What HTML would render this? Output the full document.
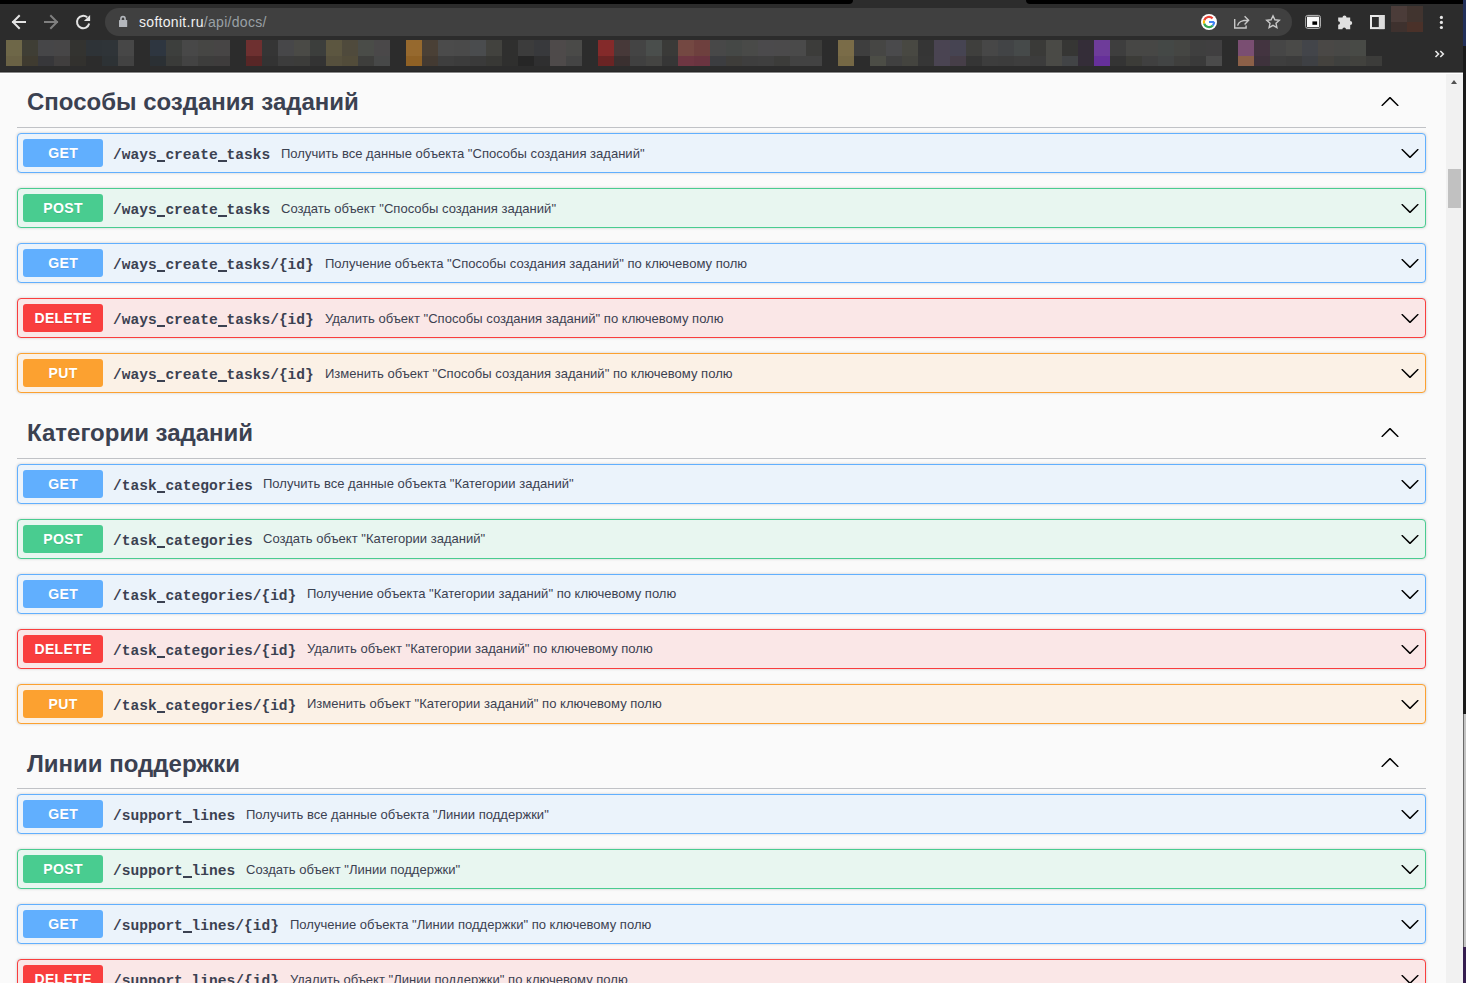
<!DOCTYPE html>
<html><head><meta charset="utf-8"><title>Swagger UI</title>
<style>
*{box-sizing:border-box}
html,body{margin:0;padding:0;width:1466px;height:983px;overflow:hidden;background:#fafafa;font-family:"Liberation Sans",sans-serif;position:relative}
#chrome{position:absolute;left:0;top:0;width:1466px;height:72px;background:#2c2c2c;border-bottom:1px solid #262626}
#cl1{position:absolute;left:0;top:72px;width:1463px;height:1px;background:#8a8a8a}
#cl2{position:absolute;left:0;top:73px;width:1463px;height:1px;background:#fff}
#chrome i{position:absolute;display:block;width:16px}
.blk{position:absolute;background:#000;top:0;height:4px}
#omni{position:absolute;left:105px;top:8px;width:1187px;height:28px;border-radius:14px;background:#404040}
#url{position:absolute;left:139px;top:13px;font-size:14px;letter-spacing:0.3px;line-height:18px;color:#f1f1f1;white-space:nowrap}
#url span{color:#9aa0a6}
.ic{position:absolute}
#page{position:absolute;left:0;top:73px;width:1446px;height:910px;background:#fafafa;overflow:hidden}
#sb{position:absolute;left:1446px;top:74px;width:17px;height:909px;background:#f1f1f1}
#thumb{position:absolute;left:1448px;top:169px;width:13px;height:39px;background:#c1c1c1}
#edge{position:absolute;left:1463px;top:0;width:3px;height:983px;background:linear-gradient(#22305a 0,#22305a 46px,#1a1a1a 46px,#1a1a1a 714px,transparent 714px,transparent 947px,#361e50 947px)}
#edge2{position:absolute;left:1463px;top:714px;width:3px;height:233px;background:#c4c4c4;border-left:1px solid #6a6a6a}
#sbup{position:absolute;left:1451px;top:80px;width:0;height:0;border-left:3.75px solid transparent;border-right:3.75px solid transparent;border-bottom:4px solid #505050}
.tag{position:absolute;left:17px;width:1409px;height:54px}
.tag h3{position:absolute;left:10px;top:14px;margin:0;font-size:24px;line-height:29px;font-weight:bold;color:#3b4151;white-space:nowrap}
.chevup{position:absolute;left:1363px;top:19px;fill:#000}
.sep{position:absolute;left:17px;width:1409px;height:1px;background:rgba(59,65,81,.3)}
.op{position:absolute;left:17px;width:1409px;height:40px;border:1px solid;border-radius:4px;box-shadow:0 0 3px rgba(0,0,0,.19)}
.op .m{position:absolute;left:5px;top:5px;width:80px;height:28px;border-radius:3px;color:#fff;font-size:14px;font-weight:bold;line-height:28px;text-align:center;letter-spacing:0.4px;text-indent:0.4px;text-shadow:0 1px 0 rgba(0,0,0,.1)}
.op .pd{position:absolute;left:95px;top:13px;height:18px;display:flex;align-items:baseline;white-space:nowrap;color:#3b4151}
.op .p{font-family:"Liberation Mono",monospace;font-size:14.56px;font-weight:bold;padding-right:10.8px}
.op .u{position:relative;color:transparent}
.op .u::after{content:'';position:absolute;left:0;right:0;top:12.6px;height:2px;background:#3b4151}
.op .d{font-size:13.5px;position:relative;top:0px;display:inline-block;transform:scaleX(0.9658);transform-origin:0 50%}
.op .chev{position:absolute;left:1382px;top:9px;fill:#000}
.get{border-color:#61affe;background:#ebf3fb} .get .m{background:#61affe}
.post{border-color:#49cc90;background:#e8f6f0} .post .m{background:#49cc90}
.delete{border-color:#f93e3e;background:#fae7e7} .delete .m{background:#f93e3e}
.put{border-color:#fca130;background:#fbf1e6} .put .m{background:#fca130}
</style></head><body>
<div id="chrome">
<div class="blk" style="left:0;width:853px;border-bottom-right-radius:6px"></div>
<div class="blk" style="left:1026px;width:437px;border-bottom-left-radius:6px"></div>
<div id="omni"></div>
<div id="url">softonit.ru<span>/api/docs/</span></div>
<i style="left:6px;top:40px;height:16px;background:#6e6748"></i>
<i style="left:6px;top:56px;height:10px;background:#6a6245"></i>
<i style="left:22px;top:40px;height:16px;background:#3f3e35"></i>
<i style="left:22px;top:56px;height:10px;background:#3f3b30"></i>
<i style="left:38px;top:40px;height:16px;background:#464648"></i>
<i style="left:38px;top:56px;height:10px;background:#37373a"></i>
<i style="left:54px;top:40px;height:16px;background:#474647"></i>
<i style="left:54px;top:56px;height:10px;background:#403e3e"></i>
<i style="left:70px;top:40px;height:16px;background:#333330"></i>
<i style="left:70px;top:56px;height:10px;background:#32312e"></i>
<i style="left:86px;top:40px;height:16px;background:#2e3337"></i>
<i style="left:86px;top:56px;height:10px;background:#2c2c2c"></i>
<i style="left:102px;top:40px;height:16px;background:#2f3438"></i>
<i style="left:102px;top:56px;height:10px;background:#2d3235"></i>
<i style="left:118px;top:40px;height:16px;background:#474747"></i>
<i style="left:118px;top:56px;height:10px;background:#424242"></i>
<i style="left:150px;top:40px;height:16px;background:#2e3640"></i>
<i style="left:150px;top:56px;height:10px;background:#2b3034"></i>
<i style="left:166px;top:40px;height:16px;background:#3d3f3d"></i>
<i style="left:166px;top:56px;height:10px;background:#3a3b39"></i>
<i style="left:182px;top:40px;height:16px;background:#484848"></i>
<i style="left:182px;top:56px;height:10px;background:#434343"></i>
<i style="left:198px;top:40px;height:16px;background:#464644"></i>
<i style="left:198px;top:56px;height:10px;background:#3d3d3c"></i>
<i style="left:214px;top:40px;height:16px;background:#474545"></i>
<i style="left:214px;top:56px;height:10px;background:#3e3c3c"></i>
<i style="left:230px;top:40px;height:16px;background:#2c2c2c"></i>
<i style="left:230px;top:56px;height:10px;background:#2c2c2c"></i>
<i style="left:246px;top:40px;height:16px;background:#6e3030"></i>
<i style="left:246px;top:56px;height:10px;background:#582626"></i>
<i style="left:262px;top:40px;height:16px;background:#353535"></i>
<i style="left:262px;top:56px;height:10px;background:#333333"></i>
<i style="left:278px;top:40px;height:16px;background:#474749"></i>
<i style="left:278px;top:56px;height:10px;background:#3c3c3c"></i>
<i style="left:294px;top:40px;height:16px;background:#4a4a46"></i>
<i style="left:294px;top:56px;height:10px;background:#3c3c3a"></i>
<i style="left:310px;top:40px;height:16px;background:#3c3e3c"></i>
<i style="left:310px;top:56px;height:10px;background:#333333"></i>
<i style="left:326px;top:40px;height:16px;background:#5c5640"></i>
<i style="left:326px;top:56px;height:10px;background:#56503d"></i>
<i style="left:342px;top:40px;height:16px;background:#4f4a3c"></i>
<i style="left:342px;top:56px;height:10px;background:#524c3a"></i>
<i style="left:358px;top:40px;height:16px;background:#4a4c48"></i>
<i style="left:358px;top:56px;height:10px;background:#3e3e3c"></i>
<i style="left:374px;top:40px;height:16px;background:#4a4849"></i>
<i style="left:374px;top:56px;height:10px;background:#474848"></i>
<i style="left:406px;top:40px;height:16px;background:#96692e"></i>
<i style="left:406px;top:56px;height:10px;background:#8f6125"></i>
<i style="left:422px;top:40px;height:16px;background:#4a4036"></i>
<i style="left:422px;top:56px;height:10px;background:#433a32"></i>
<i style="left:438px;top:40px;height:16px;background:#4b4b4b"></i>
<i style="left:438px;top:56px;height:10px;background:#3e3e3e"></i>
<i style="left:454px;top:40px;height:16px;background:#4a4a4a"></i>
<i style="left:454px;top:56px;height:10px;background:#3c3c3c"></i>
<i style="left:470px;top:40px;height:16px;background:#4a4c4e"></i>
<i style="left:470px;top:56px;height:10px;background:#3a3a3a"></i>
<i style="left:486px;top:40px;height:16px;background:#42423e"></i>
<i style="left:486px;top:56px;height:10px;background:#383835"></i>
<i style="left:502px;top:40px;height:16px;background:#2f2f2e"></i>
<i style="left:502px;top:56px;height:10px;background:#2f2f2e"></i>
<i style="left:518px;top:40px;height:16px;background:#3c3c3c"></i>
<i style="left:518px;top:56px;height:10px;background:#262626"></i>
<i style="left:534px;top:40px;height:16px;background:#38393c"></i>
<i style="left:534px;top:56px;height:10px;background:#2f2f30"></i>
<i style="left:550px;top:40px;height:16px;background:#4e4a4a"></i>
<i style="left:550px;top:56px;height:10px;background:#4e4a4a"></i>
<i style="left:566px;top:40px;height:16px;background:#4a4a48"></i>
<i style="left:566px;top:56px;height:10px;background:#444444"></i>
<i style="left:598px;top:40px;height:16px;background:#842a2a"></i>
<i style="left:598px;top:56px;height:10px;background:#6a2424"></i>
<i style="left:614px;top:40px;height:16px;background:#473939"></i>
<i style="left:614px;top:56px;height:10px;background:#3a3030"></i>
<i style="left:630px;top:40px;height:16px;background:#444444"></i>
<i style="left:630px;top:56px;height:10px;background:#404040"></i>
<i style="left:646px;top:40px;height:16px;background:#4a4e4c"></i>
<i style="left:646px;top:56px;height:10px;background:#444442"></i>
<i style="left:662px;top:40px;height:16px;background:#3a3a38"></i>
<i style="left:662px;top:56px;height:10px;background:#363636"></i>
<i style="left:678px;top:40px;height:16px;background:#744842"></i>
<i style="left:678px;top:56px;height:10px;background:#6e3642"></i>
<i style="left:694px;top:40px;height:16px;background:#6e403e"></i>
<i style="left:694px;top:56px;height:10px;background:#6a3440"></i>
<i style="left:710px;top:40px;height:16px;background:#484848"></i>
<i style="left:710px;top:56px;height:10px;background:#3c3d40"></i>
<i style="left:726px;top:40px;height:16px;background:#454846"></i>
<i style="left:726px;top:56px;height:10px;background:#3e3d3a"></i>
<i style="left:742px;top:40px;height:16px;background:#494a48"></i>
<i style="left:742px;top:56px;height:10px;background:#3e3e3e"></i>
<i style="left:758px;top:40px;height:16px;background:#4b4a4c"></i>
<i style="left:758px;top:56px;height:10px;background:#3f3f3f"></i>
<i style="left:774px;top:40px;height:16px;background:#4b4a4b"></i>
<i style="left:774px;top:56px;height:10px;background:#3c3c3a"></i>
<i style="left:790px;top:40px;height:16px;background:#4a4a4a"></i>
<i style="left:790px;top:56px;height:10px;background:#424242"></i>
<i style="left:806px;top:40px;height:16px;background:#3c3c3a"></i>
<i style="left:806px;top:56px;height:10px;background:#424242"></i>
<i style="left:838px;top:40px;height:16px;background:#7a6c48"></i>
<i style="left:838px;top:56px;height:10px;background:#756845"></i>
<i style="left:854px;top:40px;height:16px;background:#3e3e3e"></i>
<i style="left:854px;top:56px;height:10px;background:#2c2c2c"></i>
<i style="left:870px;top:40px;height:16px;background:#464644"></i>
<i style="left:870px;top:56px;height:10px;background:#4c4d46"></i>
<i style="left:886px;top:40px;height:16px;background:#4a4a4c"></i>
<i style="left:886px;top:56px;height:10px;background:#404040"></i>
<i style="left:902px;top:40px;height:16px;background:#484842"></i>
<i style="left:902px;top:56px;height:10px;background:#44443f"></i>
<i style="left:918px;top:40px;height:16px;background:#353535"></i>
<i style="left:918px;top:56px;height:10px;background:#363636"></i>
<i style="left:934px;top:40px;height:16px;background:#4a4452"></i>
<i style="left:934px;top:56px;height:10px;background:#4a4452"></i>
<i style="left:950px;top:40px;height:16px;background:#464452"></i>
<i style="left:950px;top:56px;height:10px;background:#463e48"></i>
<i style="left:966px;top:40px;height:16px;background:#3f3f3d"></i>
<i style="left:966px;top:56px;height:10px;background:#353535"></i>
<i style="left:982px;top:40px;height:16px;background:#474747"></i>
<i style="left:982px;top:56px;height:10px;background:#3d3d3d"></i>
<i style="left:998px;top:40px;height:16px;background:#424446"></i>
<i style="left:998px;top:56px;height:10px;background:#3c3c3c"></i>
<i style="left:1014px;top:40px;height:16px;background:#464a4a"></i>
<i style="left:1014px;top:56px;height:10px;background:#3e3e3e"></i>
<i style="left:1030px;top:40px;height:16px;background:#3a3a38"></i>
<i style="left:1030px;top:56px;height:10px;background:#3c3c3c"></i>
<i style="left:1046px;top:40px;height:16px;background:#4a4a46"></i>
<i style="left:1046px;top:56px;height:10px;background:#4a4a46"></i>
<i style="left:1062px;top:40px;height:16px;background:#363634"></i>
<i style="left:1062px;top:56px;height:10px;background:#424446"></i>
<i style="left:1078px;top:40px;height:16px;background:#342d38"></i>
<i style="left:1078px;top:56px;height:10px;background:#342d38"></i>
<i style="left:1094px;top:40px;height:16px;background:#6e3c9a"></i>
<i style="left:1094px;top:56px;height:10px;background:#66309a"></i>
<i style="left:1110px;top:40px;height:16px;background:#3e3e3e"></i>
<i style="left:1110px;top:56px;height:10px;background:#343434"></i>
<i style="left:1126px;top:40px;height:16px;background:#474745"></i>
<i style="left:1126px;top:56px;height:10px;background:#3c3c38"></i>
<i style="left:1142px;top:40px;height:16px;background:#474745"></i>
<i style="left:1142px;top:56px;height:10px;background:#404040"></i>
<i style="left:1158px;top:40px;height:16px;background:#444846"></i>
<i style="left:1158px;top:56px;height:10px;background:#424444"></i>
<i style="left:1174px;top:40px;height:16px;background:#454643"></i>
<i style="left:1174px;top:56px;height:10px;background:#3f3f3d"></i>
<i style="left:1190px;top:40px;height:16px;background:#3f3f3f"></i>
<i style="left:1190px;top:56px;height:10px;background:#3a3a3a"></i>
<i style="left:1206px;top:40px;height:16px;background:#403f40"></i>
<i style="left:1206px;top:56px;height:10px;background:#4b4b4b"></i>
<i style="left:1238px;top:40px;height:16px;background:#7a4e72"></i>
<i style="left:1238px;top:56px;height:10px;background:#8c6048"></i>
<i style="left:1254px;top:40px;height:16px;background:#433440"></i>
<i style="left:1254px;top:56px;height:10px;background:#3e323c"></i>
<i style="left:1270px;top:40px;height:16px;background:#464646"></i>
<i style="left:1270px;top:56px;height:10px;background:#3e3e3e"></i>
<i style="left:1286px;top:40px;height:16px;background:#4a4a48"></i>
<i style="left:1286px;top:56px;height:10px;background:#3c3c3c"></i>
<i style="left:1302px;top:40px;height:16px;background:#43454a"></i>
<i style="left:1302px;top:56px;height:10px;background:#3e4044"></i>
<i style="left:1318px;top:40px;height:16px;background:#4a4846"></i>
<i style="left:1318px;top:56px;height:10px;background:#44423e"></i>
<i style="left:1334px;top:40px;height:16px;background:#484846"></i>
<i style="left:1334px;top:56px;height:10px;background:#3f403e"></i>
<i style="left:1350px;top:40px;height:16px;background:#484a46"></i>
<i style="left:1350px;top:56px;height:10px;background:#42423e"></i>
<i style="left:1366px;top:56px;height:10px;background:#3c3c3a"></i>
<svg id="icons" width="1466" height="72" viewBox="0 0 1466 72" style="position:absolute;left:0;top:0">
<g fill="none" stroke="#e3e3e3" stroke-width="2" stroke-linecap="square">
<path d="M13 22H25M19 16L13 22L19 28"/>
</g>
<g fill="none" stroke="#7f7f7f" stroke-width="2" stroke-linecap="square">
<path d="M45 22H57M51 16L57 22L51 28"/>
</g>
<path fill="none" stroke="#e3e3e3" stroke-width="2" d="M87.2 17.3A6.2 6.2 0 1 0 89.2 23.5"/>
<path fill="#e3e3e3" d="M83.9 21.1H90.1V14.9Z"/>
<path fill="none" stroke="#b4b7bc" stroke-width="1.6" d="M120.9 20.5V18.9A2.1 2.3 0 0 1 125.1 18.9V20.5"/>
<rect x="119" y="20" width="8.2" height="7.1" rx="0.6" fill="#b4b7bc"/>
<circle cx="1209" cy="22" r="8" fill="#fff"/>
<path fill="none" stroke="#ea4335" stroke-width="2.2" d="M1212.6 18.4A5.1 5.1 0 0 0 1204.2 20.3"/>
<path fill="none" stroke="#fbbc05" stroke-width="2.2" d="M1204.2 20.3A5.1 5.1 0 0 0 1204.2 23.7"/>
<path fill="none" stroke="#34a853" stroke-width="2.2" d="M1204.2 23.7A5.1 5.1 0 0 0 1212.8 25.4"/>
<path fill="none" stroke="#4285f4" stroke-width="2.2" d="M1212.8 25.4A5.1 5.1 0 0 0 1214.1 22"/>
<path fill="#4285f4" d="M1209 21H1214.2V23H1209Z"/>
<g fill="none" stroke="#c8c8c8" stroke-width="1.4">
<path d="M1234.7 19V28H1246.1V25.5"/>
<path d="M1237.6 25.6C1238.6 21.5 1241.5 20.3 1248.2 20.3M1244.6 16.2L1248.6 20.3L1244.6 24.4"/>
<path stroke-linejoin="miter" d="M1273 15.8L1274.9 19.8L1279.3 20.3L1276 23.3L1276.9 27.6L1273 25.4L1269.1 27.6L1270 23.3L1266.7 20.3L1271.1 19.8Z"/>
</g>
<rect x="1305.7" y="15.4" width="14.7" height="13" rx="2" fill="#111" stroke="#bdbdbd" stroke-width="1"/>
<rect x="1307" y="16.6" width="12.2" height="10.6" fill="#fafafa"/>
<rect x="1312.4" y="21.4" width="4.7" height="3.4" fill="#000"/>
<path fill="#e0e0e0" d="M1338.2 17.6H1342.5A2 2 0 1 1 1346.5 17.6H1350.2V21A2 2 0 1 1 1350.2 25V29.2H1346A1.8 1.8 0 0 0 1342.4 29.2H1338.2V24.8A1.8 1.8 0 0 0 1338.2 21.2Z"/>
<rect x="1371" y="16" width="12.8" height="12.1" fill="none" stroke="#e8e8e8" stroke-width="2"/>
<rect x="1378.8" y="15" width="5.3" height="14.1" fill="#dcdcdc"/>
<rect x="1391" y="6" width="16" height="16" fill="#4b3c39"/>
<rect x="1407" y="6" width="16" height="16" fill="#41342f"/>
<rect x="1391" y="22" width="16" height="10" fill="#3e312e"/>
<rect x="1407" y="22" width="16" height="10" fill="#4a3129"/>
<circle cx="1441.4" cy="17.4" r="1.6" fill="#e8e8e8"/>
<circle cx="1441.4" cy="22.4" r="1.6" fill="#e8e8e8"/>
<circle cx="1441.4" cy="27.5" r="1.6" fill="#e8e8e8"/>
<path fill="none" stroke="#e8e8e8" stroke-width="1.6" d="M1435.5 51L1438.5 54L1435.5 57M1440.3 51L1443.3 54L1440.3 57"/>
</svg>
</div>
<div id="page"></div>
<div id="cl1"></div><div id="cl2"></div>
<div class="tag" style="top:73px"><h3 style="top:14px">Способы создания заданий</h3><svg class="chevup" width="20" height="20" viewBox="0 0 20 20"><path d="M2.582 13.891c-.272.268-.709.268-.979 0s-.271-.701 0-.969l7.908-7.83c.27-.268.707-.268.979 0l7.908 7.83c.27.268.27.701 0 .969-.271.268-.709.268-.979 0L10 6.75l-7.418 7.141z"/></svg></div>
<div class="sep" style="top:127px"></div>
<div class="op get" style="top:133px"><span class="m">GET</span><div class="pd"><span class="p">/ways<span class="u">_</span>create<span class="u">_</span>tasks</span><span class="d" style="top:-1px">Получить все данные объекта "Способы создания заданий"</span></div><svg class="chev" width="20" height="20" viewBox="0 0 20 20"><path d="M17.418 6.109c.272-.268.709-.268.979 0s.271.701 0 .969l-7.908 7.83c-.27.268-.707.268-.979 0l-7.908-7.83c-.27-.268-.27-.701 0-.969.271-.268.709-.268.979 0L10 13.25l7.418-7.141z"/></svg></div>
<div class="op post" style="top:188px"><span class="m">POST</span><div class="pd"><span class="p">/ways<span class="u">_</span>create<span class="u">_</span>tasks</span><span class="d" style="top:-1px">Создать объект "Способы создания заданий"</span></div><svg class="chev" width="20" height="20" viewBox="0 0 20 20"><path d="M17.418 6.109c.272-.268.709-.268.979 0s.271.701 0 .969l-7.908 7.83c-.27.268-.707.268-.979 0l-7.908-7.83c-.27-.268-.27-.701 0-.969.271-.268.709-.268.979 0L10 13.25l7.418-7.141z"/></svg></div>
<div class="op get" style="top:243px"><span class="m">GET</span><div class="pd"><span class="p">/ways<span class="u">_</span>create<span class="u">_</span>tasks/{id}</span><span class="d" style="top:-1px">Получение объекта "Способы создания заданий" по ключевому полю</span></div><svg class="chev" width="20" height="20" viewBox="0 0 20 20"><path d="M17.418 6.109c.272-.268.709-.268.979 0s.271.701 0 .969l-7.908 7.83c-.27.268-.707.268-.979 0l-7.908-7.83c-.27-.268-.27-.701 0-.969.271-.268.709-.268.979 0L10 13.25l7.418-7.141z"/></svg></div>
<div class="op delete" style="top:298px"><span class="m">DELETE</span><div class="pd"><span class="p">/ways<span class="u">_</span>create<span class="u">_</span>tasks/{id}</span><span class="d" style="top:-1px">Удалить объект "Способы создания заданий" по ключевому полю</span></div><svg class="chev" width="20" height="20" viewBox="0 0 20 20"><path d="M17.418 6.109c.272-.268.709-.268.979 0s.271.701 0 .969l-7.908 7.83c-.27.268-.707.268-.979 0l-7.908-7.83c-.27-.268-.27-.701 0-.969.271-.268.709-.268.979 0L10 13.25l7.418-7.141z"/></svg></div>
<div class="op put" style="top:353px"><span class="m">PUT</span><div class="pd"><span class="p">/ways<span class="u">_</span>create<span class="u">_</span>tasks/{id}</span><span class="d" style="top:-1px">Изменить объект "Способы создания заданий" по ключевому полю</span></div><svg class="chev" width="20" height="20" viewBox="0 0 20 20"><path d="M17.418 6.109c.272-.268.709-.268.979 0s.271.701 0 .969l-7.908 7.83c-.27.268-.707.268-.979 0l-7.908-7.83c-.27-.268-.27-.701 0-.969.271-.268.709-.268.979 0L10 13.25l7.418-7.141z"/></svg></div>
<div class="tag" style="top:404px"><h3 style="top:14px">Категории заданий</h3><svg class="chevup" width="20" height="20" viewBox="0 0 20 20"><path d="M2.582 13.891c-.272.268-.709.268-.979 0s-.271-.701 0-.969l7.908-7.83c.27-.268.707-.268.979 0l7.908 7.83c.27.268.27.701 0 .969-.271.268-.709.268-.979 0L10 6.75l-7.418 7.141z"/></svg></div>
<div class="sep" style="top:458px"></div>
<div class="op get" style="top:464px"><span class="m">GET</span><div class="pd"><span class="p">/task<span class="u">_</span>categories</span><span class="d" style="top:-2px">Получить все данные объекта "Категории заданий"</span></div><svg class="chev" width="20" height="20" viewBox="0 0 20 20"><path d="M17.418 6.109c.272-.268.709-.268.979 0s.271.701 0 .969l-7.908 7.83c-.27.268-.707.268-.979 0l-7.908-7.83c-.27-.268-.27-.701 0-.969.271-.268.709-.268.979 0L10 13.25l7.418-7.141z"/></svg></div>
<div class="op post" style="top:519px"><span class="m">POST</span><div class="pd"><span class="p">/task<span class="u">_</span>categories</span><span class="d" style="top:-2px">Создать объект "Категории заданий"</span></div><svg class="chev" width="20" height="20" viewBox="0 0 20 20"><path d="M17.418 6.109c.272-.268.709-.268.979 0s.271.701 0 .969l-7.908 7.83c-.27.268-.707.268-.979 0l-7.908-7.83c-.27-.268-.27-.701 0-.969.271-.268.709-.268.979 0L10 13.25l7.418-7.141z"/></svg></div>
<div class="op get" style="top:574px"><span class="m">GET</span><div class="pd"><span class="p">/task<span class="u">_</span>categories/{id}</span><span class="d" style="top:-2px">Получение объекта "Категории заданий" по ключевому полю</span></div><svg class="chev" width="20" height="20" viewBox="0 0 20 20"><path d="M17.418 6.109c.272-.268.709-.268.979 0s.271.701 0 .969l-7.908 7.83c-.27.268-.707.268-.979 0l-7.908-7.83c-.27-.268-.27-.701 0-.969.271-.268.709-.268.979 0L10 13.25l7.418-7.141z"/></svg></div>
<div class="op delete" style="top:629px"><span class="m">DELETE</span><div class="pd"><span class="p">/task<span class="u">_</span>categories/{id}</span><span class="d" style="top:-2px">Удалить объект "Категории заданий" по ключевому полю</span></div><svg class="chev" width="20" height="20" viewBox="0 0 20 20"><path d="M17.418 6.109c.272-.268.709-.268.979 0s.271.701 0 .969l-7.908 7.83c-.27.268-.707.268-.979 0l-7.908-7.83c-.27-.268-.27-.701 0-.969.271-.268.709-.268.979 0L10 13.25l7.418-7.141z"/></svg></div>
<div class="op put" style="top:684px"><span class="m">PUT</span><div class="pd"><span class="p">/task<span class="u">_</span>categories/{id}</span><span class="d" style="top:-2px">Изменить объект "Категории заданий" по ключевому полю</span></div><svg class="chev" width="20" height="20" viewBox="0 0 20 20"><path d="M17.418 6.109c.272-.268.709-.268.979 0s.271.701 0 .969l-7.908 7.83c-.27.268-.707.268-.979 0l-7.908-7.83c-.27-.268-.27-.701 0-.969.271-.268.709-.268.979 0L10 13.25l7.418-7.141z"/></svg></div>
<div class="tag" style="top:734px"><h3 style="top:15px">Линии поддержки</h3><svg class="chevup" width="20" height="20" viewBox="0 0 20 20"><path d="M2.582 13.891c-.272.268-.709.268-.979 0s-.271-.701 0-.969l7.908-7.83c.27-.268.707-.268.979 0l7.908 7.83c.27.268.27.701 0 .969-.271.268-.709.268-.979 0L10 6.75l-7.418 7.141z"/></svg></div>
<div class="sep" style="top:788px"></div>
<div class="op get" style="top:794px"><span class="m">GET</span><div class="pd"><span class="p">/support<span class="u">_</span>lines</span><span class="d" style="top:-1px">Получить все данные объекта "Линии поддержки"</span></div><svg class="chev" width="20" height="20" viewBox="0 0 20 20"><path d="M17.418 6.109c.272-.268.709-.268.979 0s.271.701 0 .969l-7.908 7.83c-.27.268-.707.268-.979 0l-7.908-7.83c-.27-.268-.27-.701 0-.969.271-.268.709-.268.979 0L10 13.25l7.418-7.141z"/></svg></div>
<div class="op post" style="top:849px"><span class="m">POST</span><div class="pd"><span class="p">/support<span class="u">_</span>lines</span><span class="d" style="top:-1px">Создать объект "Линии поддержки"</span></div><svg class="chev" width="20" height="20" viewBox="0 0 20 20"><path d="M17.418 6.109c.272-.268.709-.268.979 0s.271.701 0 .969l-7.908 7.83c-.27.268-.707.268-.979 0l-7.908-7.83c-.27-.268-.27-.701 0-.969.271-.268.709-.268.979 0L10 13.25l7.418-7.141z"/></svg></div>
<div class="op get" style="top:904px"><span class="m">GET</span><div class="pd"><span class="p">/support<span class="u">_</span>lines/{id}</span><span class="d" style="top:-1px">Получение объекта "Линии поддержки" по ключевому полю</span></div><svg class="chev" width="20" height="20" viewBox="0 0 20 20"><path d="M17.418 6.109c.272-.268.709-.268.979 0s.271.701 0 .969l-7.908 7.83c-.27.268-.707.268-.979 0l-7.908-7.83c-.27-.268-.27-.701 0-.969.271-.268.709-.268.979 0L10 13.25l7.418-7.141z"/></svg></div>
<div class="op delete" style="top:959px"><span class="m">DELETE</span><div class="pd"><span class="p">/support<span class="u">_</span>lines/{id}</span><span class="d" style="top:-1px">Удалить объект "Линии поддержки" по ключевому полю</span></div><svg class="chev" width="20" height="20" viewBox="0 0 20 20"><path d="M17.418 6.109c.272-.268.709-.268.979 0s.271.701 0 .969l-7.908 7.83c-.27.268-.707.268-.979 0l-7.908-7.83c-.27-.268-.27-.701 0-.969.271-.268.709-.268.979 0L10 13.25l7.418-7.141z"/></svg></div>
<div id="sb"></div>
<div id="thumb"></div>
<div id="sbup"></div>
<div id="edge"></div><div id="edge2"></div>
</body></html>
